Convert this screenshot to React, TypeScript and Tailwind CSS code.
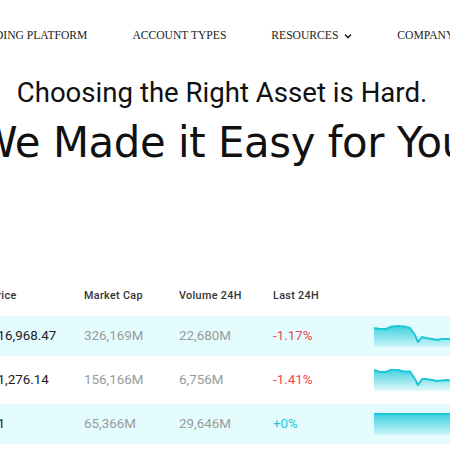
import React from 'react';

interface Asset {
  price: string;
  cap: string;
  volume: string;
  change: string;
  up: boolean;
  points: string;
}

// sparkline points in a 100x22 box
const WAVE = "0,3 6,4 12,4 18,1.5 24,1 30,1.5 36,3 41,10 44,17 48,12 52,13 58,14 63,15 68,14 73,14 78,14 84,13 90,14 100,14";
const WAVE2 = "0,1 6,3 12,3 18,0.5 24,1 30,2.5 36,2.5 41,10 44,16 48,10 52,10 58,11 63,12 68,11.5 73,11 78,12 84,12 90,12 100,12";

const ASSETS: Asset[] = [
  { price: "$16,968.47", cap: "326,169M", volume: "22,680M", change: "-1.17%", up: false, points: WAVE },
  { price: "$1,276.14", cap: "156,166M", volume: "6,756M", change: "-1.41%", up: false, points: WAVE2 },
  { price: "$1", cap: "65,366M", volume: "29,646M", change: "+0%", up: true, points: "0,1 100,1" },
];

function Sparkline({ points, id }: { points: string; id: string }) {
  const area = `0,22 ${points} 100,22`;
  return (
    <svg width="100" height="22" viewBox="0 0 100 22" preserveAspectRatio="none" className="block">
      <defs>
        <linearGradient id={id} x1="0" y1="0" x2="0" y2="1">
          <stop offset="0%" stopColor="#1fcad9" stopOpacity="0.85" />
          <stop offset="100%" stopColor="#1fcad9" stopOpacity="0.12" />
        </linearGradient>
      </defs>
      <polygon points={area} fill={`url(#${id})`} />
      <polyline points={points} fill="none" stroke="#1cc8d8" strokeWidth="2" strokeLinejoin="round" />
    </svg>
  );
}

export default function App() {
  return (
    <div className="w-[450px] h-[450px] overflow-hidden bg-white font-['Roboto',sans-serif]">
      {/* Nav */}
      <nav className="flex justify-center whitespace-nowrap pt-[27px] font-['Liberation_Serif',serif] text-[11.6px] text-[#222] uppercase">
        <div className="flex items-center gap-[45px] ml-[-24px]">
          <span>Trading Platform</span>
          <span>Account Types</span>
          <span className="flex items-center gap-[6px]">
            Resources
            <svg width="8" height="6" viewBox="0 0 8 6" className="mt-[1px]">
              <path d="M1 1.5 L4 4.5 L7 1.5" fill="none" stroke="#222" strokeWidth="1.6" />
            </svg>
          </span>
          <span>Company</span>
        </div>
      </nav>

      {/* Hero */}
      <div className="flex flex-col items-center whitespace-nowrap mt-[33px] mr-[6px]">
        <h2 className="text-[27.6px] leading-[32px] text-[#111] font-normal">Choosing the Right Asset is Hard.</h2>
        <h1 className="mt-[10px] text-[41.8px] leading-[48px] text-[#111] font-['DejaVu_Sans',sans-serif] font-normal tracking-[-0.01em]">
          We Made it Easy for You
        </h1>
      </div>

      {/* Table */}
      <div className="mt-[119px] ml-[-10px] whitespace-nowrap">
        <div className="flex items-center h-[20px] text-[10.8px] font-medium text-[#333] tracking-[0.03em]">
          <div className="w-[94px]">Price</div>
          <div className="w-[95px]">Market Cap</div>
          <div className="w-[94px]">Volume 24H</div>
          <div className="w-[101px]">Last 24H</div>
        </div>
        <div className="flex flex-col gap-[4px] mt-[10px] w-[500px]">
          {ASSETS.map((a, i) => (
            <div key={i} className={`flex items-center h-[40px] text-[13.4px] ${i % 2 === 0 ? 'bg-[#e5fcfe]' : 'bg-white'}`}>
              <div className="w-[94px] text-[#222]">{a.price}</div>
              <div className="w-[95px] text-[#9a9a9a]">{a.cap}</div>
              <div className="w-[94px] text-[#9a9a9a]">{a.volume}</div>
              <div className={`w-[101px] ${a.up ? 'text-[#1ec8d6]' : 'text-[#f2474a]'}`}>{a.change}</div>
              <Sparkline points={a.points} id={`sp${i}`} />
            </div>
          ))}
        </div>
      </div>
    </div>
  );
}
